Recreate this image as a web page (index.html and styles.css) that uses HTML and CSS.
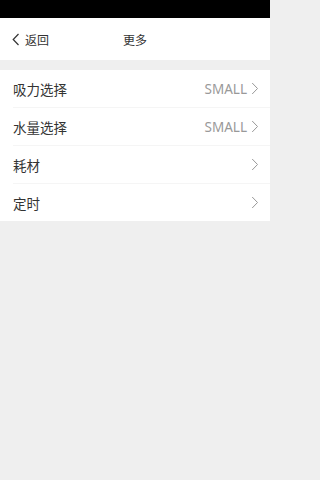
FILE: index.html
```html
<!DOCTYPE html>
<html lang="zh">
<head>
<meta charset="utf-8">
<link rel="stylesheet" href="styles.css">
</head>
<body>
<div class="status"></div>
<header class="nav">
  <div class="back">
    <svg class="back-ico" width="8" height="13" viewBox="0 0 8 13"><path d="M6.5 1 L1.2 6.5 L6.5 12" fill="none" stroke="#333" stroke-width="1.2"/></svg>
    <span>返回</span>
  </div>
  <div class="title">更多</div>
</header>
<div class="gap"></div>
<ul class="list">
  <li class="row"><span class="label">吸力选择</span><span class="value">SMALL</span><svg class="chev" width="8" height="13" viewBox="0 0 8 13"><path d="M1.2 1 L6.5 6.5 L1.2 12" fill="none" stroke="#999" stroke-width="1"/></svg></li>
  <li class="row"><span class="label">水量选择</span><span class="value">SMALL</span><svg class="chev" width="8" height="13" viewBox="0 0 8 13"><path d="M1.2 1 L6.5 6.5 L1.2 12" fill="none" stroke="#999" stroke-width="1"/></svg></li>
  <li class="row"><span class="label">耗材</span><span class="value"></span><svg class="chev" width="8" height="13" viewBox="0 0 8 13"><path d="M1.2 1 L6.5 6.5 L1.2 12" fill="none" stroke="#999" stroke-width="1"/></svg></li>
  <li class="row"><span class="label">定时</span><span class="value"></span><svg class="chev" width="8" height="13" viewBox="0 0 8 13"><path d="M1.2 1 L6.5 6.5 L1.2 12" fill="none" stroke="#999" stroke-width="1"/></svg></li>
</ul>
</body>
</html>
```
FILE: styles.css
```css
html, body {
  margin: 0;
  padding: 0;
}
body {
  width: 270px;
  height: 480px;
  background: #efefef;
  font-family: "Noto Sans CJK SC", "Noto Sans", sans-serif;
  color: #333;
}
.status {
  height: 18px;
  background: #000;
}
.nav {
  height: 42px;
  background: #fff;
  position: relative;
  display: flex;
  align-items: center;
}
.back {
  display: flex;
  align-items: center;
  padding-left: 12px;
  font-size: 12px;
  color: #333;
  gap: 5px;
}
.title {
  position: absolute;
  left: 0;
  right: 0;
  text-align: center;
  font-size: 12px;
  color: #333;
  pointer-events: none;
}
.gap {
  height: 10px;
}
.list {
  list-style: none;
  margin: 0;
  padding: 0;
  background: #fff;
}
.row {
  height: 38px;
  margin-left: 13px;
  padding-right: 11px;
  display: flex;
  align-items: center;
  border-bottom: 1px solid #f5f5f5;
  box-sizing: border-box;
}
.row:last-child {
  border-bottom: none;
  height: 37px;
}
.label {
  flex: 1;
  font-size: 13.5px;
  color: #333;
}
.value {
  font-family: "Noto Sans", sans-serif;
  font-size: 13.5px;
  color: #999;
  margin-right: 4px;
}
.chev {
  display: block;
}
```
